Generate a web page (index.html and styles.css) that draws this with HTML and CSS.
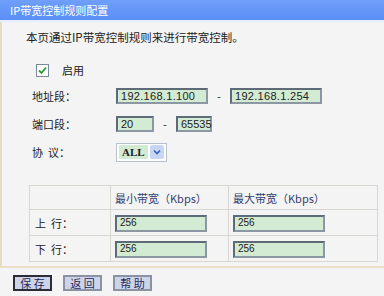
FILE: index.html
```html
<!DOCTYPE html>
<html lang="zh-CN">
    <head>
        <meta charset="UTF-8">
        <title>IP带宽控制规则配置</title>
        <link rel="stylesheet" href="styles.css">
    </head>
    <body>
        <div class="title-bar">IP带宽控制规则配置</div>

        <main class="panel">
            <p class="intro">本页通过IP带宽控制规则来进行带宽控制。</p>

            <div class="enable-row">
                <span class="check">
                    <svg width="9" height="9" viewBox="0 0 9 9"><path d="M1 4.5 L3.5 7 L8 1.5" fill="none" stroke="#2f9a2f" stroke-width="1.8"/></svg>
                </span>
                <span>启用</span>
            </div>

            <div class="form-row">
                <span class="label">地址段：</span>
                <span class="field ip">192.168.1.100</span>
                <span class="dash">-</span>
                <span class="field ip">192.168.1.254</span>
            </div>

            <div class="form-row">
                <span class="label">端口段：</span>
                <span class="field port">20</span>
                <span class="dash">-</span>
                <span class="field port-end">65535</span>
            </div>

            <div class="form-row">
                <span class="label">协&nbsp;&nbsp;议：</span>
                <span class="select">
                    <span class="select-value">ALL</span>
                    <span class="select-arrow">
                        <svg width="8" height="6" viewBox="0 0 8 6"><path d="M1 1.5 L4 4.5 L7 1.5" fill="none" stroke="#3b5fb8" stroke-width="1.6"/></svg>
                    </span>
                </span>
            </div>

            <table class="bw-table">
                <tr>
                    <td class="col-label"></td>
                    <td class="col-head">最小带宽（Kbps）</td>
                    <td class="col-head">最大带宽（Kbps）</td>
                </tr>
                <tr>
                    <td class="col-label">上&nbsp;&nbsp;行：</td>
                    <td><span class="field bw">256</span></td>
                    <td><span class="field bw">256</span></td>
                </tr>
                <tr>
                    <td class="col-label">下&nbsp;&nbsp;行：</td>
                    <td><span class="field bw">256</span></td>
                    <td><span class="field bw">256</span></td>
                </tr>
            </table>
        </main>

        <footer class="buttons-bar">
            <button class="btn btn-active">保 存</button>
            <button class="btn">返 回</button>
            <button class="btn">帮 助</button>
        </footer>
    </body>
</html>
```

FILE: styles.css
```css
body {
    margin: 0;
    width: 384px;
    height: 296px;
    overflow: hidden;
    background-color: #f4f4f4;
    font-family: "Noto Sans CJK SC", "Liberation Sans", sans-serif;
    font-size: 11px;
    color: #222;
}

.title-bar {
    height: 20px;
    line-height: 20px;
    padding-left: 10px;
    background: linear-gradient(#6f9ffb, #5b8ff7);
    border-bottom: 2px solid #e4eeff;
    color: #fff;
    font-size: 11px;
}

.panel {
    height: 246px;
    border-left: 2px solid #e6dcc4;
    border-bottom: 2px solid #eadfc6;
    box-sizing: border-box;
}

.intro {
    margin: 0;
    padding: 7px 0 0 24px;
    font-size: 11.5px;
    line-height: 16px;
}

.enable-row {
    display: flex;
    align-items: center;
    gap: 13px;
    margin: 18px 0 0 34px;
    height: 14px;
}

.check {
    width: 11px;
    height: 11px;
    border: 1px solid #7a8a9c;
    background-color: #fff;
    display: flex;
    align-items: center;
    justify-content: center;
}

.form-row {
    display: flex;
    align-items: center;
    height: 28px;
    padding-left: 30px;
}

.enable-row + .form-row {
    margin-top: 5px;
}

.label {
    width: 84px;
}

.field {
    display: inline-block;
    box-sizing: border-box;
    height: 16px;
    line-height: 12px;
    padding-left: 3px;
    background-color: #d3ead3;
    border: 2px solid #5d6b78;
    border-right-color: #8b97a2;
    border-bottom-color: #8b97a2;
    font-family: "Liberation Sans", sans-serif;
    font-size: 11px;
    color: #222;
    word-spacing: 2px;
}

.ip {
    width: 92px;
    letter-spacing: 0.3px;
}

.port {
    width: 38px;
}

.port-end {
    width: 36px;
}

.dash {
    width: 22px;
    text-align: center;
}

.select {
    display: inline-flex;
    align-items: center;
    gap: 2px;
    height: 19px;
    padding: 0 2px;
    box-sizing: border-box;
    border: 1px solid #b8c0cc;
    background-color: #fff;
}

.select-value {
    background-color: #d3ead3;
    padding: 0 3px;
    font-family: "Liberation Serif", serif;
    font-weight: bold;
    font-size: 11px;
    line-height: 14px;
}

.select-arrow {
    width: 14px;
    height: 14px;
    display: flex;
    align-items: center;
    justify-content: center;
    background-color: #c6d6f4;
    border-radius: 2px;
}

.bw-table {
    margin: 19px 0 0 27px;
    width: 349px;
    border-collapse: collapse;
    border: 1px solid #d8d6d0;
}

.bw-table td {
    border: 1px solid #d8d6d0;
    height: 24px;
    padding: 0 0 0 4px;
    box-sizing: border-box;
}

.bw-table tr + tr td {
    height: 26px;
}

.bw-table td.col-label {
    width: 81px;
    padding-left: 5px;
}

.bw-table td:nth-child(2) {
    width: 118px;
}

.col-head {
    color: #33406e;
    font-size: 11px;
}

.bw {
    width: 92px;
    height: 17px;
    font-size: 10px;
}

.buttons-bar {
    display: flex;
    gap: 11px;
    padding: 7px 0 0 13px;
}

.btn {
    width: 39px;
    height: 16px;
    padding: 0;
    box-sizing: border-box;
    border: 2px solid #8a92a4;
    background-color: #cdd4ea;
    color: #1f2a5a;
    font-family: "Noto Sans CJK SC", sans-serif;
    font-size: 11px;
    line-height: 12px;
}

.btn-active {
    border-color: #2c2c36;
}
```
